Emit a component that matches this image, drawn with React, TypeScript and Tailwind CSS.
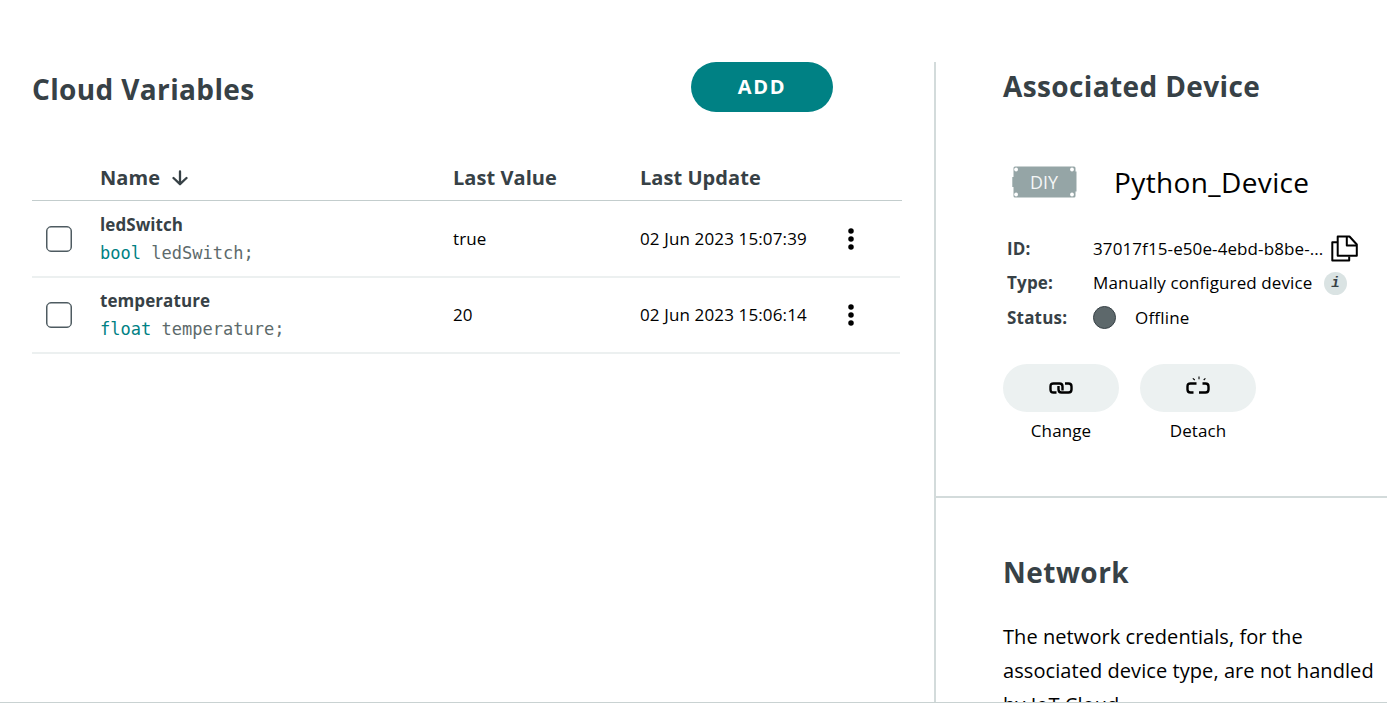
import type { ReactNode } from "react";

type Variable = {
  name: string;
  type: string;
  value: string;
  updated: string;
};

const variables: Variable[] = [
  { name: "ledSwitch", type: "bool", value: "true", updated: "02 Jun 2023 15:07:39" },
  { name: "temperature", type: "float", value: "20", updated: "02 Jun 2023 15:06:14" },
];

function ArrowDown() {
  return (
    <svg width="16" height="16" viewBox="0 0 16 16" fill="none" stroke="#374146" strokeWidth="2.3" strokeLinecap="round" strokeLinejoin="round">
      <path d="M8 1.500v12.500M1.500 8 8 14.200 14.500 8" />
    </svg>
  );
}

function MoreDots() {
  return (
    <svg width="6" height="22" viewBox="0 0 6 22">
      <circle cx="3" cy="3" r="2.75" />
      <circle cx="3" cy="11" r="2.75" />
      <circle cx="3" cy="19" r="2.75" />
    </svg>
  );
}

function CopyIcon() {
  return (
    <svg width="27" height="27" viewBox="0 0 27 27" fill="none" stroke="#000" strokeWidth="2" strokeLinejoin="round">
      <path d="M6.500 7.200H1.300v18.200h16.900v-4" />
      <path d="M6.700 1.500h11.800l7.300 8V20.800H6.700z" />
      <path d="M15.800 1.500v9h10" />
    </svg>
  );
}

function BoardIcon() {
  return (
    <svg width="66" height="32" viewBox="0 0 66 32">
      <path fill="#95a5a6" d="M3 .5h59q1.500 0 1.500 1.500v3.500h1v20h-1V30q0 1.500-1.500 1.500H3Q1.500 31.500 1.500 30V21H.3V11h1.200V2Q1.500.5 3 .5z" />
      <circle cx="4.100" cy="3.500" r="1.900" fill="#fff" />
      <circle cx="60" cy="3.500" r="1.900" fill="#fff" />
      <circle cx="4.100" cy="28.500" r="1.900" fill="#fff" />
      <circle cx="60" cy="28.500" r="1.900" fill="#fff" />
      <text x="18" y="22.500" fontFamily="Open Sans" fontWeight="400" fontSize="17.500" textLength="28" lengthAdjust="spacingAndGlyphs" fill="#f4f6f6">DIY</text>
    </svg>
  );
}

function LinkIcon() {
  return (
    <svg width="24" height="12" viewBox="0 0 24 12" fill="none" stroke="#000" strokeWidth="2.400">
      <path d="M7.500 10.500H4.500Q1.500 10.500 1.500 7.500v-3Q1.500 1.500 4.500 1.500H10.500Q13.500 1.500 13.500 4.500v4" />
      <path d="M16 1.500h3.500Q22.500 1.500 22.500 4.500v3Q22.500 10.500 19.500 10.500H12.500Q9.500 10.500 9.500 7.500v-3.500" />
    </svg>
  );
}

function UnlinkIcon() {
  return (
    <svg width="24" height="18" viewBox="0 0 24 18" fill="none" stroke="#000" strokeWidth="2.400">
      <path d="M10.500 7.500h-6Q1.500 7.500 1.500 10.500v3Q1.500 16.500 4.500 16.500h3" />
      <path d="M16.500 7.500h3Q22.500 7.500 22.500 10.500v3Q22.500 16.500 19.500 16.500h-6.500" />
      <path strokeWidth="1.100" d="M13 .5V3.300M6.800 2.300l2 1.700M19.400 2.300 17.700 4" />
    </svg>
  );
}

function ActionButton({ label, children }: { label: string; children: ReactNode }) {
  return (
    <div className="flex w-[116px] flex-col items-center">
      <button className="flex h-12 w-full items-center justify-center rounded-full bg-[#ecf1f1]">{children}</button>
      <span className="mt-[7px] text-[17px] leading-6 tracking-[0.1px]">{label}</span>
    </div>
  );
}

function VariableRow({ item }: { item: Variable }) {
  return (
    <div className="flex h-[76px] w-[868px] items-center border-b-2 border-[#ecf0f0] text-[17px]">
      <div className="mb-px ml-[14px] size-[26px] rounded-[5px] border-[1.500px] border-[#4e5b61] shadow-[inset_0_0_0_0.500px_#4e5b61]" />
      <div className="ml-7 w-[353px]">
        <div className="leading-[29px] font-bold tracking-[0.080px] text-[#374146]">{item.name}</div>
        <div className="font-['DejaVu_Sans_Mono',monospace] leading-[29px] tracking-[0.02px] text-[#5d6a6b]">
          <span className="text-[#008184]">{item.type}</span> {item.name};
        </div>
      </div>
      <div className="w-[187px] tracking-[0.130px]">{item.value}</div>
      <div className="w-[208px] tracking-[0.130px]">{item.updated}</div>
      <MoreDots />
    </div>
  );
}

function CloudVariables() {
  return (
    <main className="w-[934px] pl-8">
      <div className="flex h-[50px] items-center">
        <h1 className="w-[659px] pt-[3px] text-[28px] leading-10 font-bold tracking-[0.360px] text-[#374146]">Cloud Variables</h1>
        <button className="h-[50px] w-[142px] rounded-full bg-[#008184] text-[20px] font-bold tracking-[1.700px] text-white">ADD</button>
      </div>
      <div className="mt-[43px] mb-px flex h-[46px] w-[870px] items-center border-b border-[#c3cdcd] pt-px pl-[68px] text-[20px] font-bold tracking-[0.050px] text-[#374146]">
        <div className="flex w-[353px] items-center gap-3">
          Name
          <ArrowDown />
        </div>
        <div className="w-[187px]">Last Value</div>
        <div>Last Update</div>
      </div>
      {variables.map((item) => (
        <VariableRow key={item.name} item={item} />
      ))}
    </main>
  );
}

function DevicePanel() {
  return (
    <aside className="flex w-[453px] flex-col border-l-2 border-[#d3dbdb]">
      <section className="h-[436px] shrink-0 border-b-2 border-[#d3dbdb] pl-[67px]">
        <h2 className="pt-[4px] text-[28px] leading-10 font-bold tracking-[0.380px] text-[#374146]">Associated Device</h2>
        <div className="mt-[56px] flex h-10 items-center pl-[9px]">
          <BoardIcon />
          <span className="ml-9 text-[28px] tracking-[0.380px]">Python_Device</span>
        </div>
        <dl className="mt-[29px] ml-1 text-[17px]">
          <div className="flex h-[34.500px] items-center">
            <dt className="w-[86px] font-bold tracking-[0.200px] text-[#374146]">ID:</dt>
            <dd className="flex items-center tracking-[0.100px]">
              <span className="w-[238px]">37017f15-e50e-4ebd-b8be-...</span>
              <CopyIcon />
            </dd>
          </div>
          <div className="flex h-[34.500px] items-center">
            <dt className="w-[86px] font-bold tracking-[0.200px] text-[#374146]">Type:</dt>
            <dd className="flex items-center tracking-[0.100px]">
              <span className="w-[231px]">Manually configured device</span>
              <span className="mt-px flex size-[23px] items-center justify-center rounded-full bg-[#dae3e3] pt-px font-['Liberation_Mono',monospace] text-[14px] font-bold text-[#374146] italic">i</span>
            </dd>
          </div>
          <div className="flex h-[34.500px] items-center">
            <dt className="w-[86px] font-bold tracking-[0.200px] text-[#374146]">Status:</dt>
            <dd className="flex items-center tracking-[0.200px]">
              <span className="mr-[19px] size-[23px] rounded-full border border-[#374146] bg-[#5d686b]" />
              Offline
            </dd>
          </div>
        </dl>
        <div className="mt-[29px] flex gap-[21px]">
          <ActionButton label="Change"><LinkIcon /></ActionButton>
          <ActionButton label="Detach"><div className="pb-[5px]"><UnlinkIcon /></div></ActionButton>
        </div>
      </section>
      <section className="pt-[54px] pl-[67px]">
        <h2 className="text-[28px] leading-10 font-bold tracking-[0.480px] text-[#374146]">Network</h2>
        <p className="mt-[28px] w-[384px] text-[20px] leading-[34px] tracking-[0.070px]">
          The network credentials, for the
          <br />
          associated device type, are not handled
          <br />
          by IoT Cloud
        </p>
      </section>
    </aside>
  );
}

export default function App() {
  return (
    <div className="flex h-[703px] w-[1387px] overflow-hidden border-b border-[#c9d2d2] bg-white pt-[62px] font-['Open_Sans',sans-serif] text-black">
      <CloudVariables />
      <DevicePanel />
    </div>
  );
}
